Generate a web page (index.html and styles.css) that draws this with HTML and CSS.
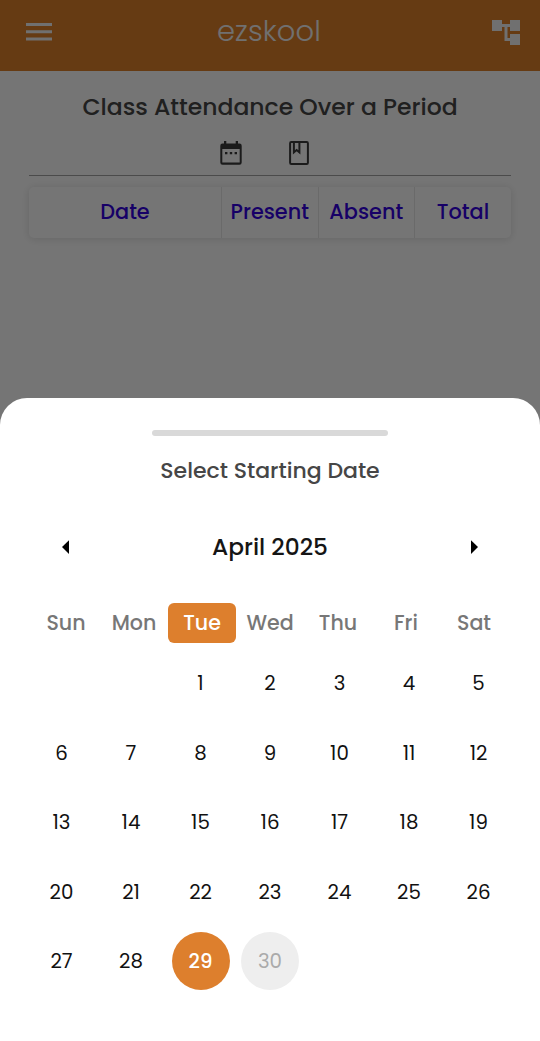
FILE: index.html
```html
<!DOCTYPE html>
<html lang="en">
<head>
<meta charset="utf-8">
<title>ezskool</title>
<link rel="stylesheet" href="styles.css">
</head>
<body>
<div class="app">
  <header class="topbar">
    <svg class="menu" viewBox="0 0 26 18"><path d="M0 0h26v3H0zM0 7.2h26v3H0zM0 14.4h26v3H0z"/></svg>
    <span class="brand">ezskool</span>
    <svg class="tree" viewBox="0 0 28 26"><path d="M0 1h10v11H0zM18 1h10v11H18zM18 15h10v11H18zM10 5h8v3h-2.500v11H18v3h-5.500V8H10z"/></svg>
  </header>
  <main class="report">
    <h1 class="title">Class Attendance Over a Period</h1>
    <div class="filters">
      <svg viewBox="0 0 22 24"><path fill-rule="evenodd" d="M4 0h2.300v2.500h9.400V0H18v2.500h1.500A2.200 2.200 0 0 1 21.700 4.700v16.800a2.200 2.200 0 0 1-2.200 2.200h-17A2.200 2.200 0 0 1 .3 21.500V4.700A2.200 2.200 0 0 1 2.500 2.500H4zM2.300 8v13.600h17.400V8zM5 10.900h2.400v2.300H5zM9.800 10.900h2.400v2.300H9.800zM14.600 10.900H17v2.300h-2.400z"/></svg>
      <svg class="book" viewBox="0 0 20 24"><path d="M2.300 1.100h15.400a1.200 1.200 0 0 1 1.200 1.200v19.400a1.200 1.200 0 0 1-1.200 1.200H2.300a1.200 1.200 0 0 1-1.200-1.200V2.300a1.200 1.200 0 0 1 1.200-1.200zM4.900 1v10.300l2.700-2.300 2.800 2.300V1"/></svg>
    </div>
    <div class="table">
      <span class="c-date">Date</span><span class="c-present">Present</span><span class="c-absent">Absent</span><span class="c-total">Total</span>
    </div>
  </main>
  <div class="scrim"></div>
  <section class="sheet">
    <div class="handle"></div>
    <h2 class="prompt">Select Starting Date</h2>
    <div class="month">
      <svg viewBox="0 0 8 14"><path d="M8 .3v13.600L1 7.100z"/></svg>
      <span>April 2025</span>
      <svg viewBox="0 0 8 14"><path d="M0 .3v13.600l7-6.800z"/></svg>
    </div>
    <div class="week"><span>Sun</span><span>Mon</span><span class="today">Tue</span><span>Wed</span><span>Thu</span><span>Fri</span><span>Sat</span></div>
    <div class="days">
      <span class="first">1</span><span>2</span><span>3</span><span>4</span><span>5</span>
      <span>6</span><span>7</span><span>8</span><span>9</span><span>10</span><span>11</span><span>12</span>
      <span>13</span><span>14</span><span>15</span><span>16</span><span>17</span><span>18</span><span>19</span>
      <span>20</span><span>21</span><span>22</span><span>23</span><span>24</span><span>25</span><span>26</span>
      <span>27</span><span>28</span><span class="selected">29</span><span class="disabled">30</span>
    </div>
  </section>
</div>
</body>
</html>
```
FILE: styles.css
```css
* { box-sizing: border-box; }
body { margin: 0; background: #fff; font-family: Poppins, Inter, "Open Sans", sans-serif; }
h1, h2 { margin: 0; font-weight: 500; }
.app { position: relative; width: 540px; height: 1041px; overflow: hidden; }
.topbar { height: 71px; padding: 0 20px 8px 26px; background: #de802b; display: grid; grid-template-columns: 28px 1fr 28px; align-items: center; fill: #f4f4f4; }
.menu { width: 26px; height: 18px; }
.tree { width: 28px; height: 26px; }
.brand { padding-right: 8px; text-align: center; font-size: 29px; font-weight: 300; letter-spacing: .1px; color: #f4f4f4; }
.report { padding: 20px 29px 0; }
.title { height: 32px; line-height: 32px; text-align: center; font-size: 23.500px; color: #464646; white-space: nowrap; }
.filters { height: 53px; border-bottom: 1.500px solid #a4a4a4; display: flex; justify-content: center; gap: 47px; padding: 17.500px 12px 0 0; fill: #3c3c3c; }
.filters svg { width: 22px; height: 24px; }
.filters .book { width: 20px; height: 24px; fill: none; stroke: #3c3c3c; stroke-width: 2; }
.table { margin-top: 11px; height: 51px; display: grid; grid-template-columns: 192px 96.500px 96.500px 1fr; border-radius: 5px; box-shadow: 0 1px 8px #0002; font-size: 20.800px; font-weight: 500; color: #3200e0; }
.table span { display: flex; align-items: center; justify-content: center; padding: 0 0 2px 0; border-left: 1px solid #e8e8e8; }
.table .c-date { border-left: 0; }
.scrim { position: absolute; inset: 0; background: rgba(0, 0, 0, .54); }
.sheet { position: absolute; left: 0; right: 0; bottom: 0; height: 643px; border-radius: 27px 27px 0 0; background: #fff; display: flex; flex-direction: column; }
.handle { width: 236px; height: 6px; margin: 32px auto 0; border-radius: 3px; background: #d9d9d9; }
.prompt { margin-top: 19px; height: 32px; line-height: 32px; text-align: center; font-size: 22px; color: #464646; }
.month { margin-top: 44px; height: 32px; padding: 0 61px; display: flex; align-items: center; justify-content: space-between; font-size: 23.300px; font-weight: 500; color: #151515; }
.month svg { width: 8px; height: 14px; fill: #000; }
.week { margin: 40px 32px 0; height: 40px; display: grid; grid-template-columns: repeat(7, 1fr); font-size: 20.600px; font-weight: 500; color: #777; }
.week span { display: flex; align-items: center; justify-content: center; padding-bottom: 2px; }
.week .today { background: #dd7f2d; color: #fff; border-radius: 6px; }
.days { margin: 5.400px 26.750px 0; display: grid; grid-template-columns: repeat(7, 69.500px); grid-auto-rows: 69.500px; place-items: center; font-size: 19.800px; color: #111; }
.days span { width: 58px; height: 58px; border-radius: 50%; display: flex; align-items: center; justify-content: center; }
.days .first { grid-column: 3; }
.days .selected { background: #dd7f2d; color: #fff; font-weight: 500; }
.days .disabled { background: #eee; color: #aaa; }
```
